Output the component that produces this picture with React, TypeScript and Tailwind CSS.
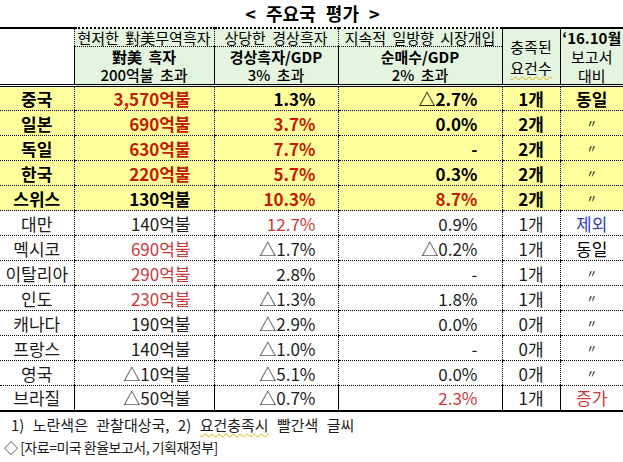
interface Row {
  name: string;
  trade: string;
  tradeRed?: boolean;
  current: string;
  currentRed?: boolean;
  fx: string;
  fxRed?: boolean;
  count: string;
  vs: string;
  vsColor?: string;
  watch?: boolean;
}

const rows: Row[] = [
  { name: "중국", trade: "3,570억불", tradeRed: true, current: "1.3%", fx: "△2.7%", count: "1개", vs: "동일", watch: true },
  { name: "일본", trade: "690억불", tradeRed: true, current: "3.7%", currentRed: true, fx: "0.0%", count: "2개", vs: "〃", watch: true },
  { name: "독일", trade: "630억불", tradeRed: true, current: "7.7%", currentRed: true, fx: "-", count: "2개", vs: "〃", watch: true },
  { name: "한국", trade: "220억불", tradeRed: true, current: "5.7%", currentRed: true, fx: "0.3%", count: "2개", vs: "〃", watch: true },
  { name: "스위스", trade: "130억불", current: "10.3%", currentRed: true, fx: "8.7%", fxRed: true, count: "2개", vs: "〃", watch: true },
  { name: "대만", trade: "140억불", current: "12.7%", currentRed: true, fx: "0.9%", count: "1개", vs: "제외", vsColor: "text-[#2f3fb0]" },
  { name: "멕시코", trade: "690억불", tradeRed: true, current: "△1.7%", fx: "△0.2%", count: "1개", vs: "동일" },
  { name: "이탈리아", trade: "290억불", tradeRed: true, current: "2.8%", fx: "-", count: "1개", vs: "〃" },
  { name: "인도", trade: "230억불", tradeRed: true, current: "△1.3%", fx: "1.8%", count: "1개", vs: "〃" },
  { name: "캐나다", trade: "190억불", current: "△2.9%", fx: "0.0%", count: "0개", vs: "〃" },
  { name: "프랑스", trade: "140억불", current: "△1.0%", fx: "-", count: "0개", vs: "〃" },
  { name: "영국", trade: "△10억불", current: "△5.1%", fx: "0.0%", count: "0개", vs: "〃" },
  { name: "브라질", trade: "△50억불", current: "△0.7%", fx: "2.3%", fxRed: true, count: "1개", vs: "증가", vsColor: "text-[#c83a3a]" },
];

function red(on: boolean | undefined, watch: boolean | undefined) {
  if (!on) return watch ? "text-black" : "text-[#1c1c1c]";
  return watch ? "text-[#c41a00]" : "text-[#c83a3a]";
}

function App() {
  return (
    <div className="w-[623px] h-[462px] bg-white font-['Noto_Sans_CJK_KR','Noto_Sans',sans-serif] text-black">
      <div className="h-[27px] flex items-center justify-center text-[18px] font-bold [word-spacing:6px] pl-[2px]">
        &lt; 주요국 평가 &gt;
      </div>
      <table className="w-[623px] table-fixed border-collapse">
        <colgroup>
          <col className="w-[74px]" />
          <col className="w-[140px]" />
          <col className="w-[124px]" />
          <col className="w-[164px]" />
          <col className="w-[58px]" />
          <col className="w-[63px]" />
        </colgroup>
        <thead className="text-[15px] leading-[17px] [word-spacing:3px]">
          <tr className="h-[18px]">
            <th rowSpan={3} className="border-t-2 border-t-black border-b-[3px] border-b-black border-double bg-white"></th>
            <th className="border-t-2 border-t-black border-l border-l-black border-b border-b-black border-dotted bg-[#e3f4df] font-normal whitespace-nowrap">현저한 對美무역흑자</th>
            <th className="border-t-2 border-t-black border-l border-l-black border-b border-b-black border-dotted bg-[#e3f4df] font-normal whitespace-nowrap">상당한 경상흑자</th>
            <th className="border-t-2 border-t-black border-l border-l-black border-b border-b-black border-dotted bg-[#e3f4df] font-normal whitespace-nowrap">지속적 일방향 시장개입</th>
            <th rowSpan={3} className="border-t-2 border-t-black border-l border-l-black border-b-[3px] border-b-black border-double bg-[#e3f4df] font-normal">
              <div className="flex flex-col items-center gap-[4px]">
                <span>충족된</span>
                <span className="underline decoration-wavy decoration-[#d8b400] decoration-1 underline-offset-2">요건수</span>
              </div>
            </th>
            <th rowSpan={3} className="border-t-2 border-t-black border-l border-l-black border-b-[3px] border-b-black border-double bg-[#e3f4df] font-normal">
              <div className="flex flex-col items-center gap-[2px]">
                <span className="font-semibold">‘16.10월</span>
                <span>보고서</span>
                <span>대비</span>
              </div>
            </th>
          </tr>
          <tr className="h-[19px]">
            <th className="border-l border-l-black bg-[#e3f4df] font-semibold">對美 흑자</th>
            <th className="border-l border-l-black bg-[#e3f4df] font-semibold">경상흑자/GDP</th>
            <th className="border-l border-l-black bg-[#e3f4df] font-semibold">순매수/GDP</th>
          </tr>
          <tr className="h-[20px]">
            <th className="border-l border-l-black border-b-[3px] border-b-black border-double bg-[#e3f4df] font-medium">200억불 초과</th>
            <th className="border-l border-l-black border-b-[3px] border-b-black border-double bg-[#e3f4df] font-medium">3% 초과</th>
            <th className="border-l border-l-black border-b-[3px] border-b-black border-double bg-[#e3f4df] font-medium">2% 초과</th>
          </tr>
        </thead>
        <tbody className="text-[17px] leading-none">
          {rows.map((r, i) => {
            const last = i === rows.length - 1;
            const bg = r.watch ? "bg-[#ffff9e] font-bold" : "bg-white font-normal";
            const edge = last ? "border-b-2 border-b-black border-solid" : "border-b border-b-black border-dotted";
            return (
              <tr key={r.name} className={`h-[25px] ${bg}`}>
                <td className={`${edge} text-center ${r.watch ? "text-black" : "text-[#1c1c1c]"}`}>{r.name}</td>
                <td className={`${edge} border-l border-l-black text-right pr-[23px] ${red(r.tradeRed, r.watch)}`}>{r.trade}</td>
                <td className={`${edge} border-l border-l-black text-right pr-[22px] ${red(r.currentRed, r.watch)}`}>{r.current}</td>
                <td className={`${edge} border-l border-l-black text-right pr-[24px] ${red(r.fxRed, r.watch)}`}>{r.fx}</td>
                <td className={`${edge} border-l border-l-black text-center ${r.watch ? "text-black" : "text-[#1c1c1c]"}`}>{r.count}</td>
                <td className={`${edge} border-l border-l-black text-center ${r.vsColor ?? "text-black"} ${r.vs === "〃" ? "text-[11px] font-normal" : ""}`}>{r.vs}</td>
              </tr>
            );
          })}
        </tbody>
      </table>
      <div className="pl-[11px] pt-[1px] text-[15px] leading-[23px] text-[#1c1c1c] [word-spacing:5px]">
        1) 노란색은 관찰대상국, 2){" "}
        <span className="underline decoration-wavy decoration-[#d8b400] decoration-1 underline-offset-2">요건충족시</span> 빨간색 글씨
      </div>
      <div className="pl-[4px] text-[14px] leading-[23px] tracking-[-0.5px] text-[#1c1c1c]">◇ [자료=미국 환율보고서, 기획재정부]</div>
    </div>
  );
}

export default App;
